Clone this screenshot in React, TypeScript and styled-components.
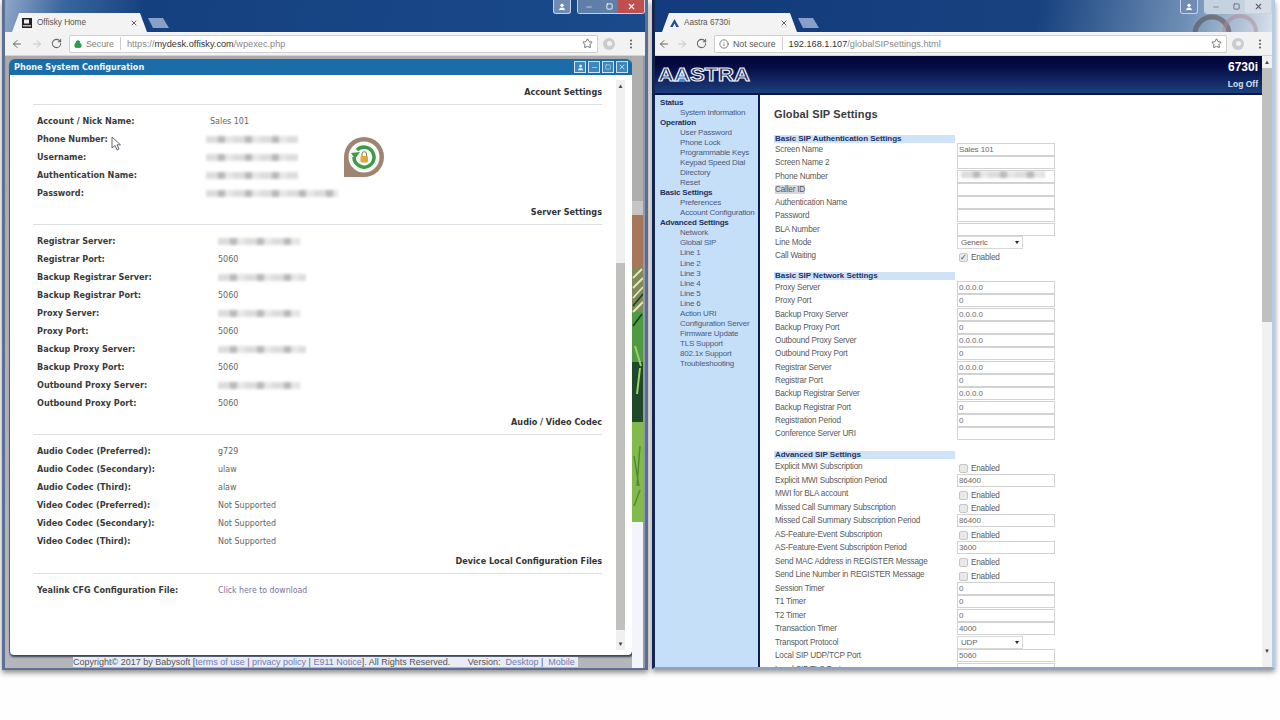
import React from 'react'
import styled, { createGlobalStyle } from 'styled-components'
import { ArrowLeft, ArrowRight, RotateCw, Star, Lock, Info, EllipsisVertical, X, Minus, Square, User } from 'lucide-react'

const Global = createGlobalStyle`
  html, body { margin: 0; padding: 0; background: #fdfefd; }
  body { font-family: "Liberation Sans", Arial, sans-serif; overflow: hidden; }
`

const Desktop = styled.div`
  width: 1280px;
  height: 720px;
  display: flex;
  align-items: flex-start;
  gap: 4px;
  padding-left: 2px;
  box-sizing: border-box;
  overflow: hidden;
`

const Win = styled.div<{ $w: number; $h: number; $faded?: boolean }>`
  width: ${p => p.$w}px;
  height: ${p => p.$h}px;
  flex: none;
  position: relative;
  display: flex;
  flex-direction: column;
  box-sizing: border-box;
  border-style: solid;
  border-width: 0 3px 2px 3px;
  border-color: ${p => (p.$faded ? '#b9cbe2 #b9cbe2 #8fa3c0 #14264f' : '#5d6f92')};
  box-shadow: 0 3px 5px rgba(60, 60, 60, 0.55);
`

const TitleStrip = styled.div<{ $faded?: boolean }>`
  height: 32px;
  flex: none;
  display: flex;
  align-items: flex-end;
  padding-left: 7px;
  position: relative;
  overflow: hidden;
  background: ${p =>
    p.$faded
      ? 'linear-gradient(100deg, #123a7c 0%, #17427f 62%, #6f8fb5 86%, #d7e0ea 100%)'
      : 'linear-gradient(100deg, #8ea6c8 0%, #3b679f 9%, #15407f 22%, #1a4a8b 100%)'};
`

const Tab = styled.div<{ $pad: number }>`
  width: 135px;
  height: 19px;
  background: #f3f3f3;
  clip-path: polygon(0 100%, 7px 0, 128px 0, 100% 100%);
  display: flex;
  align-items: center;
  padding: 0 9px 0 ${p => p.$pad}px;
  box-sizing: border-box;
  gap: 5px;
  font-size: 8.2px;
  color: #555;
  flex: none;
`

const TabTitle = styled.span`
  flex: 1;
  white-space: nowrap;
`

const NewTab = styled.div`
  width: 21px;
  height: 10px;
  margin: 0 0 4px 1px;
  background: #8a9fc8;
  clip-path: polygon(0 0, 15px 0, 100% 100%, 5px 100%);
  flex: none;
`

const WinControls = styled.div`
  position: absolute;
  top: 0;
  right: 0;
  display: flex;
  align-items: flex-start;
  gap: 6px;
`

const ProfileBtn = styled.div`
  width: 16px;
  height: 13px;
  border: 1px solid #c6d2e2;
  border-top: 0;
  border-radius: 0 0 3px 3px;
  background: #6f8bb2;
  color: #fff;
  display: flex;
  align-items: center;
  justify-content: center;
`

const CtlGroup = styled.div`
  display: flex;
  height: 13px;
  border: 1px solid #c6d2e2;
  border-top: 0;
  border-radius: 0 0 3px 3px;
  overflow: hidden;
`

const Ctl = styled.div<{ $w: number; $bg: string; $c: string }>`
  width: ${p => p.$w}px;
  background: ${p => p.$bg};
  color: ${p => p.$c};
  display: flex;
  align-items: center;
  justify-content: center;
`

const Toolbar = styled.div`
  height: 24px;
  flex: none;
  display: flex;
  align-items: center;
  background: #f2f2f2;
  color: #666;
  box-sizing: border-box;
  border-bottom: 1px solid #d4d4d4;
`

const NavBtn = styled.div<{ $w: number; $dim?: boolean }>`
  width: ${p => p.$w}px;
  flex: none;
  display: flex;
  align-items: center;
  justify-content: center;
  color: ${p => (p.$dim ? '#c4c4c4' : '#666')};
`

const UrlBox = styled.div<{ $w: number }>`
  width: ${p => p.$w}px;
  flex: none;
  height: 18px;
  background: #fff;
  border: 1px solid #cfcfcf;
  border-radius: 2px;
  box-sizing: border-box;
  display: flex;
  align-items: center;
  padding: 0 4px;
  font-size: 9.2px;
  white-space: nowrap;
`

const Scheme = styled.span<{ $c: string }>`
  color: ${p => p.$c};
  margin-left: 4px;
  font-size: 8.8px;
`

const UrlSep = styled.span`
  width: 1px;
  height: 13px;
  background: #ccc;
  margin: 0 6px;
`

const UrlHost = styled.span`
  color: #333;
`

const UrlDim = styled.span`
  color: #888;
`

const Fill = styled.span`
  flex: 1;
`

const EyeDot = styled.div`
  width: 12px;
  height: 12px;
  border-radius: 50%;
  background: #c9cdcf;
  display: flex;
  align-items: center;
  justify-content: center;
  &::after {
    content: '';
    width: 5px;
    height: 5px;
    border-radius: 50%;
    background: #f2f2f2;
  }
`

/* left window */
const LeftBody = styled.div`
  flex: 1;
  min-height: 0;
  display: grid;
  grid-template-columns: 627px 13px;
  background: #a8a8a8;
`

const LeftMain = styled.div`
  display: flex;
  flex-direction: column;
  padding: 3px 0 0 4px;
  background: linear-gradient(180deg, #a9a9a9 0, #b4b6bb 100%);
`

const Modal = styled.div`
  width: 623px;
  height: 596px;
  flex: none;
  box-sizing: border-box;
  border-radius: 6px 6px 4px 4px;
  background: #1b6da9;
  display: flex;
  flex-direction: column;
  box-shadow: 1px 2px 2px rgba(20, 30, 50, 0.75);
  overflow: hidden;
`

const ModalBar = styled.div`
  height: 16px;
  flex: none;
  display: flex;
  align-items: center;
  justify-content: space-between;
  padding: 0 4px 0 5px;
  font: bold 9px "DejaVu Sans Condensed", "DejaVu Sans", Verdana, sans-serif;
  color: #f2f7fb;
`

const ModalBtns = styled.div`
  display: flex;
  gap: 2px;
`

const ModalBtn = styled.div`
  width: 10px;
  height: 10px;
  border: 1px solid #cfe2f1;
  color: #e8f2fa;
  background: #3d87bd;
  display: flex;
  align-items: center;
  justify-content: center;
`

const ModalBody = styled.div`
  flex: 1;
  min-height: 0;
  background: #fff;
  margin-left: 1px;
  display: flex;
  border-radius: 0 0 4px 4px;
`

const Form = styled.div`
  width: 569px;
  flex: none;
  margin-left: 23px;
  padding-top: 6px;
  position: relative;
`

const SectionHead = styled.div<{ $extra?: number }>`
  height: ${p => 24 + (p.$extra || 0)}px;
  box-sizing: border-box;
  border-bottom: 1px solid #dcdfe3;
  padding-bottom: 1px;
  display: flex;
  align-items: center;
  justify-content: flex-end;
  font: bold 9px "DejaVu Sans Condensed", "DejaVu Sans", Verdana, sans-serif;
  color: #333;
`

const RowList = styled.div`
  padding: 6px 0 0 4px;
`

const Row = styled.div`
  height: 18px;
  box-sizing: border-box;
  padding-top: 2px;
  display: flex;
  align-items: center;
`

const RowLabel = styled.div<{ $w: number }>`
  width: ${p => p.$w}px;
  flex: none;
  font: bold 9px "DejaVu Sans Condensed", "DejaVu Sans", Verdana, sans-serif;
  color: #3b3b3b;
`

const RowValue = styled.div`
  font: 8.9px "DejaVu Sans Condensed", "DejaVu Sans", Verdana, sans-serif;
  color: #666;
`

const LinkValue = styled(RowValue)`
  color: #77739f;
  font-size: 8.7px;
`

const Blurred = styled.div<{ $w: number; $shift?: number }>`
  width: ${p => p.$w}px;
  height: 7px;
  margin-left: ${p => p.$shift || 0}px;
  filter: blur(1.8px);
  background: repeating-linear-gradient(90deg, #dcdcdc 0 12px, #b8b8bc 12px 19px, #e6e6e6 19px 27px);
`

const RingMark = styled.svg`
  position: absolute;
  left: 310px;
  top: 61px;
`

const CursorMark = styled.svg`
  position: absolute;
  left: 78px;
  top: 61px;
`

const Scroll = styled.div<{ $w: number; $bg: string }>`
  width: ${p => p.$w}px;
  flex: none;
  display: flex;
  flex-direction: column;
  background: ${p => p.$bg};
`

const ScrollArrow = styled.div`
  height: 12px;
  flex: none;
  display: flex;
  align-items: center;
  justify-content: center;
  font-size: 6px;
  color: #444;
`

const ScrollGap = styled.div<{ $h: number }>`
  height: ${p => p.$h}px;
  flex: none;
`

const ScrollThumb = styled.div<{ $h: number }>`
  height: ${p => p.$h}px;
  flex: none;
  background: #c0c1be;
`

const LeftScrollSlot = styled.div`
  margin-left: 14px;
  margin-top: 5px;
  margin-bottom: 5px;
  display: flex;
`

const Copyright = styled.div`
  margin: 2px 0 0 64px;
  width: 505px;
  height: 10px;
  background: #e9ebf6;
  font: 9px/10px "Liberation Sans", Arial, sans-serif;
  color: #555;
  white-space: nowrap;
  display: flex;
`

const FootLink = styled.span`
  color: #6f7db0;
`

const PlantStrip = styled.svg`
  display: block;
`

/* right window */
const RightBody = styled.div`
  flex: 1;
  min-height: 0;
  display: flex;
  background: #fff;
`

const PageCol = styled.div`
  flex: 1;
  min-width: 0;
  display: flex;
  flex-direction: column;
`

const Banner = styled.div`
  height: 39px;
  flex: none;
  box-sizing: border-box;
  border-bottom: 2px solid #0a1745;
  background: linear-gradient(180deg, #020537 0%, #060c44 30%, #1c3f7e 100%);
  display: flex;
  align-items: center;
  justify-content: space-between;
  padding: 0 4px 0 3px;
  color: #fff;
`

const BannerRight = styled.div`
  display: flex;
  flex-direction: column;
  align-items: flex-end;
  gap: 6px;
`

const Model = styled.div`
  font: bold 12px/12px "Liberation Sans", Arial, sans-serif;
`

const LogOff = styled.div`
  font: bold 8.5px/10px "Liberation Sans", Arial, sans-serif;
  color: #d6e2f2;
`

const PageRow = styled.div`
  flex: 1;
  min-height: 0;
  display: flex;
  overflow: hidden;
`

const Nav = styled.div`
  width: 98px;
  flex: none;
  background: #c6dff8;
  border-right: 2px solid #0d1d59;
  padding: 3px 0 0 5px;
  font-size: 8px;
  letter-spacing: -0.2px;
  line-height: 10.03px;
`

const NavHead = styled.div`
  color: #1c2f60;
  font-weight: bold;
  white-space: nowrap;
`

const NavItem = styled.div`
  color: #4a5a7c;
  padding-left: 20px;
  white-space: nowrap;
`

const Main = styled.div`
  flex: 1;
  min-width: 0;
  padding: 13px 0 0 14px;
  overflow: hidden;
`

const PageTitle = styled.div`
  font: bold 11px/13px "Liberation Sans", Arial, sans-serif;
  letter-spacing: 0.13px;
  color: #3a3a3a;
  margin-bottom: 14px;
`

const Group = styled.div<{ $after: number }>`
  margin-bottom: ${p => p.$after}px;
`

const GroupBar = styled.div<{ $gap: number }>`
  width: 180px;
  height: 8px;
  background: #cfe2f7;
  font: bold 8px/8px "Liberation Sans", Arial, sans-serif;
  letter-spacing: -0.05px;
  color: #1c3068;
  padding-left: 1px;
  margin-bottom: ${p => p.$gap}px;
  white-space: nowrap;
`

const Field = styled.div<{ $step: number }>`
  height: ${p => p.$step}px;
  display: flex;
  align-items: center;
  font-size: 8.2px;
  letter-spacing: -0.2px;
  color: #5a5a5a;
`

const FieldLabel = styled.div`
  width: 183px;
  flex: none;
  padding-left: 1px;
  box-sizing: border-box;
  white-space: nowrap;
`

const Marked = styled.span`
  background: #d8d8d8;
`

const TextBox = styled.div`
  width: 95px;
  height: 11px;
  border: 1px solid #d2d2d2;
  margin: -1px 0;
  padding-left: 1px;
  background: #fff;
  font-size: 8px;
  letter-spacing: -0.1px;
  line-height: 11px;
  color: #6a6a6a;
  overflow: hidden;
  white-space: nowrap;
`

const SelectBox = styled.div`
  width: 58px;
  height: 11px;
  border: 1px solid #d8d8d8;
  padding: 0 3px;
  display: flex;
  align-items: center;
  justify-content: space-between;
  font-size: 8px;
  color: #666;
  &::after {
    content: '';
    border-left: 2px solid transparent;
    border-right: 2px solid transparent;
    border-top: 3px solid #222;
  }
`

const CheckWrap = styled.div`
  display: flex;
  align-items: center;
  gap: 3px;
  margin: 3px 0 0 2px;
`

const CheckBox = styled.div`
  width: 7px;
  height: 7px;
  border: 1px solid #c6c6c6;
  border-radius: 2px;
  background: #e9e9e9;
  color: #444;
  font-size: 8px;
  line-height: 7px;
  text-align: center;
`

const RightScrollSlot = styled.div`
  width: 10px;
  flex: none;
  display: flex;
`

const Rings = styled.svg`
  position: absolute;
  right: 0;
  top: 0;
`

type FieldDef = { label: string; value?: string; kind?: 'text' | 'check' | 'on' | 'select' | 'blur'; mark?: boolean }

const accountRows = ['Phone Number:', 'Username:', 'Authentication Name:']

const serverRows: [string, string | null, number?][] = [
  ['Registrar Server:', null, 82],
  ['Registrar Port:', '5060'],
  ['Backup Registrar Server:', null, 88],
  ['Backup Registrar Port:', '5060'],
  ['Proxy Server:', null, 82],
  ['Proxy Port:', '5060'],
  ['Backup Proxy Server:', null, 88],
  ['Backup Proxy Port:', '5060'],
  ['Outbound Proxy Server:', null, 82],
  ['Outbound Proxy Port:', '5060'],
]

const codecRows = [
  ['Audio Codec (Preferred):', 'g729'],
  ['Audio Codec (Secondary):', 'ulaw'],
  ['Audio Codec (Third):', 'alaw'],
  ['Video Codec (Preferred):', 'Not Supported'],
  ['Video Codec (Secondary):', 'Not Supported'],
  ['Video Codec (Third):', 'Not Supported'],
]

const navTree: [string, string[]][] = [
  ['Status', ['System Information']],
  ['Operation', ['User Password', 'Phone Lock', 'Programmable Keys', 'Keypad Speed Dial', 'Directory', 'Reset']],
  ['Basic Settings', ['Preferences', 'Account Configuration']],
  ['Advanced Settings', ['Network', 'Global SIP', 'Line 1', 'Line 2', 'Line 3', 'Line 4', 'Line 5', 'Line 6', 'Action URI', 'Configuration Server', 'Firmware Update', 'TLS Support', '802.1x Support', 'Troubleshooting']],
]

const groups: { title: string; step: number; barGap: number; after: number; fields: FieldDef[] }[] = [
  { title: 'Basic SIP Authentication Settings', step: 13.27, barGap: 0, after: 9.6, fields: [
    { label: 'Screen Name', value: 'Sales 101' },
    { label: 'Screen Name 2', value: '' },
    { label: 'Phone Number', kind: 'blur' },
    { label: 'Caller ID', value: '', mark: true },
    { label: 'Authentication Name', value: '' },
    { label: 'Password', value: '' },
    { label: 'BLA Number', value: '' },
    { label: 'Line Mode', value: 'Generic', kind: 'select' },
    { label: 'Call Waiting', kind: 'on' },
  ] },
  { title: 'Basic SIP Network Settings', step: 13.27, barGap: 1, after: 11, fields: [
    { label: 'Proxy Server', value: '0.0.0.0' },
    { label: 'Proxy Port', value: '0' },
    { label: 'Backup Proxy Server', value: '0.0.0.0' },
    { label: 'Backup Proxy Port', value: '0' },
    { label: 'Outbound Proxy Server', value: '0.0.0.0' },
    { label: 'Outbound Proxy Port', value: '0' },
    { label: 'Registrar Server', value: '0.0.0.0' },
    { label: 'Registrar Port', value: '0' },
    { label: 'Backup Registrar Server', value: '0.0.0.0' },
    { label: 'Backup Registrar Port', value: '0' },
    { label: 'Registration Period', value: '0' },
    { label: 'Conference Server URI', value: '' },
  ] },
  { title: 'Advanced SIP Settings', step: 13.5, barGap: 1, after: 0, fields: [
    { label: 'Explicit MWI Subscription', kind: 'check' },
    { label: 'Explicit MWI Subscription Period', value: '86400' },
    { label: 'MWI for BLA account', kind: 'check' },
    { label: 'Missed Call Summary Subscription', kind: 'check' },
    { label: 'Missed Call Summary Subscription Period', value: '86400' },
    { label: 'AS-Feature-Event Subscription', kind: 'check' },
    { label: 'AS-Feature-Event Subscription Period', value: '3600' },
    { label: 'Send MAC Address in REGISTER Message', kind: 'check' },
    { label: 'Send Line Number in REGISTER Message', kind: 'check' },
    { label: 'Session Timer', value: '0' },
    { label: 'T1 Timer', value: '0' },
    { label: 'T2 Timer', value: '0' },
    { label: 'Transaction Timer', value: '4000' },
    { label: 'Transport Protocol', value: 'UDP', kind: 'select' },
    { label: 'Local SIP UDP/TCP Port', value: '5060' },
    { label: 'Local SIP TLS Port', value: '5061' },
  ] },
]

const FieldControl = ({ f }: { f: FieldDef }) => {
  if (f.kind === 'select') return <SelectBox>{f.value}</SelectBox>
  if (f.kind === 'check' || f.kind === 'on')
    return (
      <CheckWrap>
        <CheckBox>{f.kind === 'on' ? '✓' : ''}</CheckBox>
        <span>Enabled</span>
      </CheckWrap>
    )
  if (f.kind === 'blur')
    return (
      <TextBox>
        <Blurred $w={84} $shift={2} />
      </TextBox>
    )
  return <TextBox>{f.value}</TextBox>
}

const ChromeBar = ({ backGap, urlW, children }: { backGap: number; urlW: number; children: React.ReactNode }) => (
  <Toolbar>
    <NavBtn $w={backGap + 18}><ArrowLeft size={12} strokeWidth={2} /></NavBtn>
    <NavBtn $w={18} $dim><ArrowRight size={12} strokeWidth={2} /></NavBtn>
    <NavBtn $w={20}><RotateCw size={11} strokeWidth={2.2} /></NavBtn>
    <NavBtn $w={3} />
    <UrlBox $w={urlW}>
      {children}
      <Fill />
      <Star size={11} strokeWidth={1.6} color="#444" />
    </UrlBox>
    <NavBtn $w={22}><EyeDot /></NavBtn>
    <NavBtn $w={22}><EllipsisVertical size={12} strokeWidth={2.4} /></NavBtn>
  </Toolbar>
)

const Controls = ({ faded }: { faded?: boolean }) => (
  <WinControls>
    <ProfileBtn><User size={8} fill="#fff" /></ProfileBtn>
    <CtlGroup>
      <Ctl $w={22} $bg={faded ? '#c5d2df' : '#5f7ea8'} $c={faded ? '#667' : '#eee'}><Minus size={8} /></Ctl>
      <Ctl $w={18} $bg={faded ? '#c5d2df' : '#5f7ea8'} $c={faded ? '#667' : '#fff'}><Square size={7} strokeWidth={3} /></Ctl>
      <Ctl $w={26} $bg={faded ? '#d6dde6' : '#c0504f'} $c={faded ? '#667' : '#fff'}><X size={9} strokeWidth={3} /></Ctl>
    </CtlGroup>
  </WinControls>
)

const App = () => (
  <>
    <Global />
    <Desktop>
      <Win $w={646} $h={670}>
        <TitleStrip>
          <Tab $pad={10}>
            <svg width="10" height="10" viewBox="0 0 10 10">
              <rect width="10" height="10" fill="#222" />
              <rect x="2" y="1.5" width="5" height="4" fill="#eee" />
              <rect x="1" y="7" width="8" height="1.5" fill="#bbb" />
            </svg>
            <TabTitle>Offisky Home</TabTitle>
            <X size={8} strokeWidth={2.5} color="#444" />
          </Tab>
          <NewTab />
          <Controls />
        </TitleStrip>
        <ChromeBar backGap={5} urlW={529}>
          <Lock size={8} strokeWidth={3} color="#2e9b50" fill="#2e9b50" />
          <Scheme $c="#7e7e7e">Secure</Scheme>
          <UrlSep />
          <UrlDim>https://</UrlDim><UrlHost>mydesk.offisky.com</UrlHost><UrlDim>/wpexec.php</UrlDim>
        </ChromeBar>
        <LeftBody>
          <LeftMain>
            <Modal>
              <ModalBar>
                Phone System Configuration
                <ModalBtns>
                  <ModalBtn><User size={7} fill="#e8f2fa" /></ModalBtn>
                  <ModalBtn><Minus size={7} /></ModalBtn>
                  <ModalBtn><Square size={6} /></ModalBtn>
                  <ModalBtn><X size={8} /></ModalBtn>
                </ModalBtns>
              </ModalBar>
              <ModalBody>
                <Form>
                  <SectionHead>Account Settings</SectionHead>
                  <RowList>
                    <Row><RowLabel $w={173}>Account / Nick Name:</RowLabel><RowValue>Sales 101</RowValue></Row>
                    {accountRows.map(l => (
                      <Row key={l}><RowLabel $w={173}>{l}</RowLabel><Blurred $w={92} $shift={-4} /></Row>
                    ))}
                    <Row><RowLabel $w={173}>Password:</RowLabel><Blurred $w={132} $shift={-4} /></Row>
                  </RowList>
                  <RingMark width="42" height="42" viewBox="0 0 42 42">
                    <path d="M21 1a20 20 0 1 1 0 40H1V21A20 20 0 0 1 21 1z" fill="#a08472" />
                    <circle cx="21" cy="21" r="15.5" fill="#fbfbf6" />
                    <path d="M11 21a10 10 0 1 0 3-7" fill="none" stroke="#3c9c4a" strokeWidth="3.5" />
                    <path d="M8 17l9-1-5 7z" fill="#3c9c4a" />
                    <rect x="17.5" y="20" width="7.5" height="6.5" rx="1" fill="#dfa93a" />
                    <path d="M19 20v-2a2.3 2.3 0 0 1 4.6 0v2" fill="none" stroke="#8a7a50" strokeWidth="1" />
                  </RingMark>
                  <CursorMark width="10" height="15" viewBox="0 0 10 15">
                    <path d="M1 1v11l3-2.5 2 4.5 2-1-2-4.2h3.5z" fill="#fff" stroke="#556" strokeWidth="0.9" />
                  </CursorMark>
                  <SectionHead>Server Settings</SectionHead>
                  <RowList>
                    {serverRows.map(([l, v, w]) => (
                      <Row key={l}>
                        <RowLabel $w={181}>{l}</RowLabel>
                        {v ? <RowValue>{v}</RowValue> : <Blurred $w={w as number} />}
                      </Row>
                    ))}
                  </RowList>
                  <SectionHead>Audio / Video Codec</SectionHead>
                  <RowList>
                    {codecRows.map(([l, v]) => (
                      <Row key={l}><RowLabel $w={181}>{l}</RowLabel><RowValue>{v}</RowValue></Row>
                    ))}
                  </RowList>
                  <SectionHead $extra={1}>Device Local Configuration Files</SectionHead>
                  <RowList>
                    <Row><RowLabel $w={181}>Yealink CFG Configuration File:</RowLabel><LinkValue>Click here to download</LinkValue></Row>
                  </RowList>
                </Form>
                <LeftScrollSlot>
                  <Scroll $w={9} $bg="#f0f0f0">
                    <ScrollArrow>▲</ScrollArrow>
                    <ScrollGap $h={171} />
                    <ScrollThumb $h={367} />
                    <ScrollGap $h={8} />
                    <ScrollArrow>▼</ScrollArrow>
                  </Scroll>
                </LeftScrollSlot>
              </ModalBody>
            </Modal>
            <Copyright>
              Copyright© 2017 by Babysoft [<FootLink>terms of use</FootLink>&nbsp;|&nbsp;<FootLink>privacy policy</FootLink>&nbsp;|&nbsp;<FootLink>E911 Notice</FootLink>]. All Rights Reserved.&nbsp;&nbsp;&nbsp;&nbsp;&nbsp;&nbsp;&nbsp;Version:&nbsp;&nbsp;<FootLink>Desktop</FootLink>&nbsp;|&nbsp;&nbsp;<FootLink>Mobile</FootLink>
            </Copyright>
          </LeftMain>
          <PlantStrip width="13" height="612" viewBox="0 0 13 612" preserveAspectRatio="none">
            <rect width="13" height="612" fill="#aeaeae" />
            <rect y="145" width="11" height="14" fill="#c9c4c4" />
            <rect y="159" width="11" height="52" fill="#a8765a" />
            <rect y="211" width="11" height="45" fill="#7f8a5a" />
            <rect y="256" width="11" height="50" fill="#4f9a42" />
            <rect y="306" width="11" height="60" fill="#1f4a2a" />
            <rect y="366" width="11" height="100" fill="#82bb4c" />
            <path d="M1 222l9-9M1 232l10-10M1 242l10-11M1 256l10-10" stroke="#e4e8b8" strokeWidth="1.8" />
            <path d="M1 250l10-12M1 270l9-12" stroke="#173f26" strokeWidth="1.6" />
            <path d="M3 290l6 20M8 312l-3 26" stroke="#9ed06a" strokeWidth="2" />
            <path d="M2 400l5 30M8 390l-3 40M2 450l6 -16" stroke="#4c8a34" strokeWidth="1.4" />
            <rect y="466" width="11" height="146" fill="#f3f5fa" />
            <rect x="11" width="2" height="612" fill="#8f9ab0" />
          </PlantStrip>
        </LeftBody>
      </Win>
      <Win $w={623} $h={669} $faded>
        <TitleStrip $faded>
          <Rings width="90" height="32" viewBox="0 0 90 32">
            <circle cx="30" cy="34" r="17" fill="none" stroke="#5a4a4a" strokeWidth="5" opacity="0.55" />
            <circle cx="58" cy="32" r="16" fill="none" stroke="#b08890" strokeWidth="4" opacity="0.5" />
          </Rings>
          <Tab $pad={8}>
            <svg width="9" height="8" viewBox="0 0 10 9">
              <path d="M5 0l5 9H7L5 5 3 9H0z" fill="#1f4f9c" />
            </svg>
            <TabTitle>Aastra 6730i</TabTitle>
            <X size={8} strokeWidth={2.5} color="#444" />
          </Tab>
          <NewTab />
          <Controls faded />
        </TitleStrip>
        <ChromeBar backGap={0} urlW={513}>
          <Info size={10} strokeWidth={1.8} color="#555" />
          <Scheme $c="#555">Not secure</Scheme>
          <UrlSep />
          <UrlHost>192.168.1.107</UrlHost><UrlDim>/globalSIPsettings.html</UrlDim>
        </ChromeBar>
        <RightBody>
          <PageCol>
            <Banner>
              <svg width="94" height="24" viewBox="0 0 94 24">
                <path d="M15 19L27 4v15z" fill="#3f8ad8" />
                <text x="0" y="18" textLength="92" lengthAdjust="spacingAndGlyphs" fontFamily="Liberation Sans, Arial, sans-serif" fontWeight="bold" fontSize="19" fill="#1a2a5a" fillOpacity="0.55" stroke="#eef2f7" strokeWidth="1.1">AASTRA</text>
              </svg>
              <BannerRight>
                <Model>6730i</Model>
                <LogOff>Log Off</LogOff>
              </BannerRight>
            </Banner>
            <PageRow>
              <Nav>
                {navTree.map(([h, items]) => (
                  <React.Fragment key={h}>
                    <NavHead>{h}</NavHead>
                    {items.map(i => <NavItem key={i}>{i}</NavItem>)}
                  </React.Fragment>
                ))}
              </Nav>
              <Main>
                <PageTitle>Global SIP Settings</PageTitle>
                {groups.map(g => (
                  <Group key={g.title} $after={g.after}>
                    <GroupBar $gap={g.barGap}>{g.title}</GroupBar>
                    {g.fields.map(f => (
                      <Field key={f.label} $step={g.step}>
                        <FieldLabel>{f.mark ? <Marked>{f.label}</Marked> : f.label}</FieldLabel>
                        <FieldControl f={f} />
                      </Field>
                    ))}
                  </Group>
                ))}
              </Main>
            </PageRow>
          </PageCol>
          <RightScrollSlot>
            <Scroll $w={10} $bg="#f1f1f1">
              <ScrollArrow>▲</ScrollArrow>
              <ScrollThumb $h={254} />
              <ScrollGap $h={323} />
              <ScrollArrow>▼</ScrollArrow>
            </Scroll>
          </RightScrollSlot>
        </RightBody>
      </Win>
    </Desktop>
  </>
)

export default App
